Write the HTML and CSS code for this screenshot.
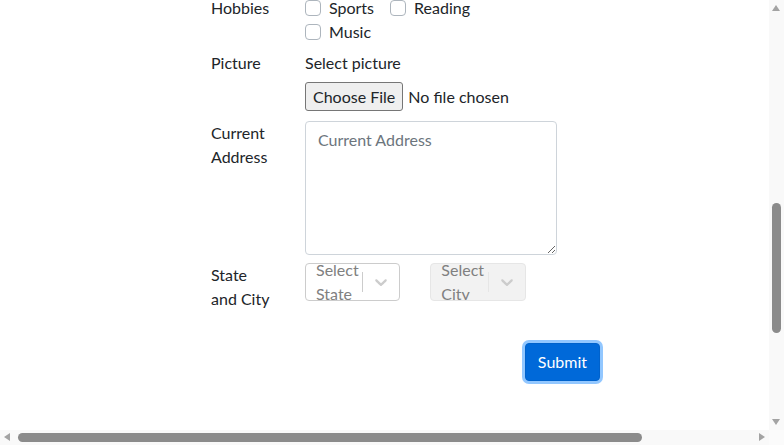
FILE: index.html
```html
<!DOCTYPE html>
<html lang="en">
<head>
<meta charset="utf-8">
<title>ToolsQA - Practice Form</title>
<link rel="stylesheet" href="styles.css">
</head>
<body>
<div class="page">
  <form class="form" onsubmit="return false">
    <div class="row">
      <div class="label-col">Hobbies</div>
      <div class="input-col">
        <div class="option-list hobby-list">
          <label class="check"><input type="checkbox" class="check-input"><span>Sports</span></label>
          <label class="check"><input type="checkbox" class="check-input"><span>Reading</span></label>
          <label class="check"><input type="checkbox" class="check-input"><span>Music</span></label>
        </div>
      </div>
    </div>

    <div class="row picture-row">
      <div class="label-col">Picture</div>
      <div class="input-col picture-col">
        <label class="picture-label">Select picture</label>
        <input type="file" class="file-input">
      </div>
    </div>

    <div class="row">
      <div class="label-col">Current Address</div>
      <div class="input-col">
        <textarea class="address" rows="5" placeholder="Current Address"></textarea>
      </div>
    </div>

    <div class="row">
      <div class="label-col">State and&nbsp;City</div>
      <div class="half">
        <div class="select">
          <div class="select-value"><div class="select-placeholder">Select State</div></div>
          <span class="select-sep"></span>
          <div class="select-indicator">
            <svg viewBox="0 0 20 20" width="20" height="20"><path d="M4.516 7.548c0.436-0.446 1.043-0.481 1.576 0l3.908 3.747 3.908-3.747c0.533-0.481 1.141-0.446 1.574 0 0.436 0.445 0.408 1.197 0 1.615-0.406 0.418-4.695 4.502-4.695 4.502-0.217 0.223-0.502 0.335-0.787 0.335s-0.57-0.112-0.789-0.335c0 0-4.287-4.084-4.695-4.502s-0.436-1.17 0-1.615z"/></svg>
          </div>
        </div>
      </div>
      <div class="half">
        <div class="select disabled">
          <div class="select-value"><div class="select-placeholder">Select City</div></div>
          <span class="select-sep"></span>
          <div class="select-indicator">
            <svg viewBox="0 0 20 20" width="20" height="20"><path d="M4.516 7.548c0.436-0.446 1.043-0.481 1.576 0l3.908 3.747 3.908-3.747c0.533-0.481 1.141-0.446 1.574 0 0.436 0.445 0.408 1.197 0 1.615-0.406 0.418-4.695 4.502-4.695 4.502-0.217 0.223-0.502 0.335-0.787 0.335s-0.57-0.112-0.789-0.335c0 0-4.287-4.084-4.695-4.502s-0.436-1.17 0-1.615z"/></svg>
          </div>
        </div>
      </div>
    </div>

    <div class="submit-row">
      <button type="submit" class="submit-btn">Submit</button>
    </div>
  </form>
</div>

<div class="scrollbar vbar">
  <span class="arrow arrow-up"></span>
  <span class="thumb"></span>
  <span class="arrow arrow-down"></span>
</div>
<div class="scrollbar hbar">
  <span class="arrow arrow-left"></span>
  <span class="thumb"></span>
  <span class="arrow arrow-right"></span>
</div>
<div class="scrollbar corner"></div>
</body>
</html>
```
FILE: styles.css
```css
* { box-sizing: border-box; }
html, body { margin: 0; }
body {
  font-family: Lato, "Open Sans", sans-serif;
  font-size: 16px;
  line-height: 24px;
  color: #212529;
  background: #fff;
  height: 445px;
  overflow: hidden;
}
.page { padding-left: 196px; }
.form {
  display: flex;
  flex-direction: column;
  width: 376px;
}
.row { display: flex; margin-top: 8px; }
.row:first-child { margin-top: -4px; }
.label-col { flex: 0 0 94px; padding: 0 15px; }
.input-col { flex: 0 0 282px; padding: 0 15px; }
.half { flex: 0 0 125.33px; padding: 0 15px; }

.option-list { display: flex; flex-wrap: wrap; }
.hobby-list { max-width: 200px; }
.check {
  display: inline-flex;
  align-items: flex-start;
  margin-right: 16px;
}
.check-input {
  appearance: none;
  -webkit-appearance: none;
  flex: 0 0 16px;
  width: 16px;
  height: 16px;
  margin: 4px 8px 0 0;
  border: 1px solid #adb5bd;
  border-radius: 4px;
  background: #fff;
}

.picture-row { margin-top: 7px; }
.picture-col { padding-bottom: 2px; }
.picture-label { display: block; margin-bottom: 7px; }
.file-input {
  display: block;
  height: 29px;
  font: inherit;
  color: #212529;
}
.file-input::file-selector-button {
  font: inherit;
  height: 29px;
  padding: 0 7px;
  margin-right: 5px;
  color: #212529;
  background: #efefef;
  border: 1px solid #767676;
  border-radius: 3px;
}

.address {
  display: block;
  width: 100%;
  height: 134px;
  padding: 6px 12px;
  border: 1px solid #ced4da;
  border-radius: 4px;
  font: inherit;
  color: #495057;
  resize: vertical;
}
.address::placeholder { color: #6c757d; }

.select {
  display: flex;
  height: 38px;
  background: #fff;
  border: 1px solid hsl(0, 0%, 80%);
  border-radius: 4px;
}
.select-value {
  position: relative;
  flex: 1;
  overflow: hidden;
  padding: 2px 8px;
}
.select-placeholder {
  position: absolute;
  top: 50%;
  transform: translateY(-50%);
  margin: 0 2px;
  color: hsl(0, 0%, 50%);
}
.select-sep {
  width: 1px;
  margin: 8px 0;
  background: hsl(0, 0%, 80%);
}
.select-indicator {
  display: flex;
  padding: 8px;
  color: hsl(0, 0%, 80%);
}
.select-indicator svg { fill: currentColor; display: block; }
.select.disabled {
  background: hsl(0, 0%, 95%);
  border-color: hsl(0, 0%, 90%);
}
.select.disabled .select-sep { background: hsl(0, 0%, 90%); }

.submit-row {
  display: flex;
  justify-content: flex-end;
  width: 404px;
  margin-top: 32px;
}
.submit-btn {
  font: inherit;
  color: #fff;
  background: #0069d9;
  border: 1px solid #0062cc;
  border-radius: 4px;
  padding: 6px 12px;
  box-shadow: 0 0 0 3px rgba(38, 143, 255, 0.5);
}

/* window scrollbars */
.scrollbar { position: fixed; background: #f9f9f9; }
.vbar { top: 0; right: 0; width: 15px; height: 430px; }
.hbar { left: 0; bottom: 0; width: 769px; height: 15px; }
.corner { right: 0; bottom: 0; width: 15px; height: 15px; background: #fbfbfb; }
.thumb { position: absolute; background: #8b8b8b; border-radius: 5px; }
.vbar .thumb { left: 3px; width: 9px; top: 203px; height: 130px; }
.hbar .thumb { top: 3px; height: 9px; left: 18px; width: 624px; }
.arrow { position: absolute; width: 0; height: 0; border-style: solid; border-color: transparent; }
.arrow-up { left: 3px; top: 5px; border-width: 0 4.5px 6px; border-bottom-color: #a3a3a3; }
.arrow-down { left: 3px; bottom: 5px; border-width: 6px 4.5px 0; border-top-color: #a3a3a3; }
.arrow-left { top: 3px; left: 4px; border-width: 4.5px 6px 4.5px 0; border-right-color: #a3a3a3; }
.arrow-right { top: 3px; right: 4px; border-width: 4.5px 0 4.5px 6px; border-left-color: #a3a3a3; }
```
